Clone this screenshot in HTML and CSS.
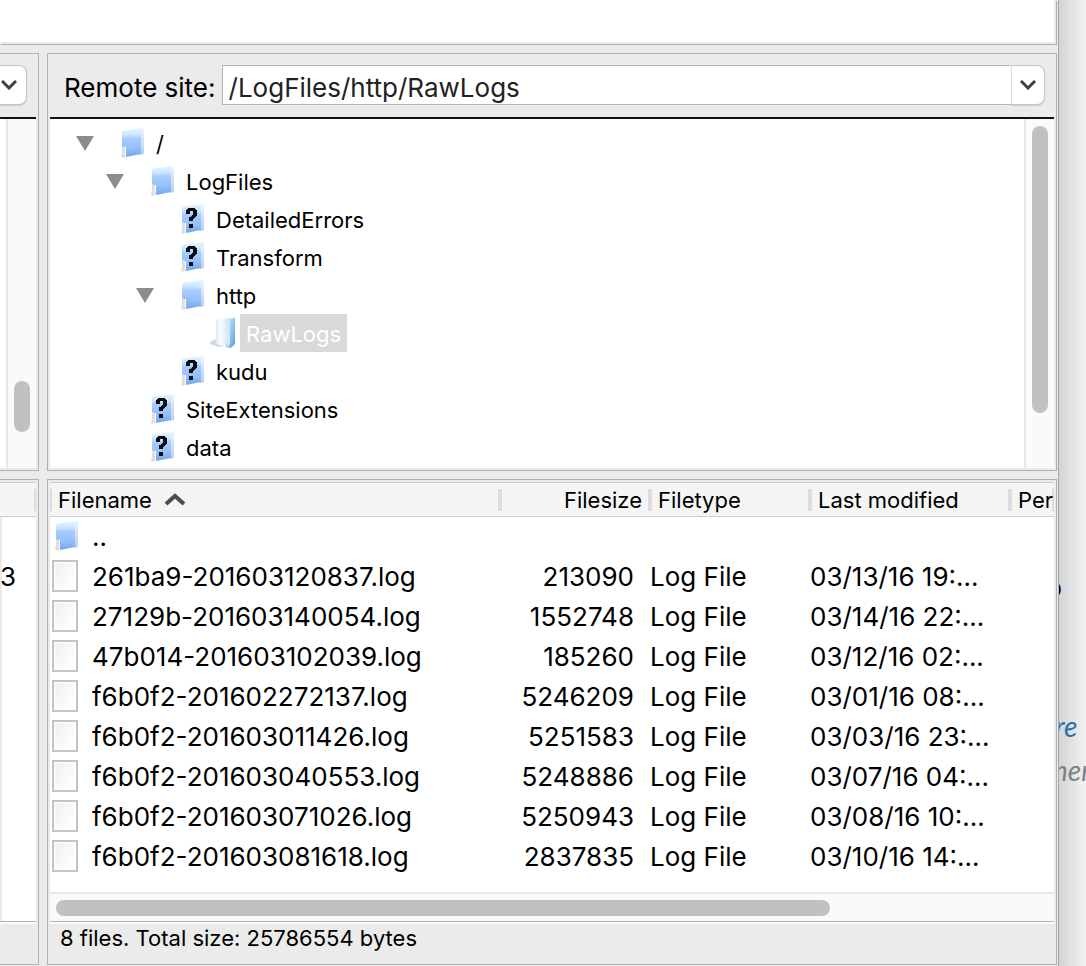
FILE: index.html
```html
<!DOCTYPE html>
<html lang="en">

<head>
  <meta charset="utf-8">
  <title>Remote site</title>
  <link rel="stylesheet" href="styles.css">
</head>

<body>

  <!-- shared icons -->
  <svg class="defs" width="0" height="0">
    <defs>
      <linearGradient id="blue" x1="0" y1="0" x2="0" y2="1">
        <stop offset="0" stop-color="#e4f6ff"/>
        <stop offset="0.22" stop-color="#cde7ff"/>
        <stop offset="0.36" stop-color="#a6ccff"/>
        <stop offset="0.7" stop-color="#94bffa"/>
        <stop offset="1" stop-color="#6fa6ec"/>
      </linearGradient>
      <linearGradient id="side" x1="0" y1="0" x2="0" y2="1">
        <stop offset="0" stop-color="#e9f6fd"/>
        <stop offset="1" stop-color="#b5cfee"/>
      </linearGradient>
      <linearGradient id="open" x1="0" y1="0" x2="1" y2="1">
        <stop offset="0" stop-color="#d2effc"/>
        <stop offset="1" stop-color="#5b9ddc"/>
      </linearGradient>
      <linearGradient id="paper" x1="0" y1="0" x2="1" y2="0">
        <stop offset="0" stop-color="#d5e6f0"/>
        <stop offset="0.5" stop-color="#f8fcfe"/>
        <stop offset="1" stop-color="#dcebf3"/>
      </linearGradient>
      <linearGradient id="sheet" x1="0" y1="0" x2="1" y2="1">
        <stop offset="0" stop-color="#f1f1f1"/>
        <stop offset="1" stop-color="#ffffff"/>
      </linearGradient>
    </defs>
    <symbol id="folder" viewBox="0 0 26 32">
      <path d="M20 2l4-1v26l-4 1z" fill="url(#side)"/>
      <path d="M2 4l19-3v26L6 30V20H2z" fill="url(#blue)"/>
      <path d="M2 19l3 1v8l2 1-5 2-1-2 1-3z" fill="#dedede"/>
    </symbol>
    <symbol id="unknown" viewBox="0 0 26 32">
      <use href="#folder"/>
      <path d="M6 7h1V6h1V5h7v1h1v1h1v6h-1v1h-1v1h-1v1h-1v2H9v-4h2v-1h1v-1h1V8h-3v3H6zM9 21h4v4H9z" fill="#0b0b12"/>
    </symbol>
    <symbol id="opened" viewBox="0 0 26 32">
      <path d="M16 2l9-1v26l-4 4-5-1z" fill="url(#open)"/>
      <path d="M16 2l4-1v26l-3 3z" fill="#cdeafa"/>
      <path d="M6 3l11-2v25l-4 4-9-2 2-4z" fill="url(#paper)"/>
      <path d="M0 25l6-3v5l7 2-4 1-9-3z" fill="#d3dbe2"/>
    </symbol>
    <symbol id="file" viewBox="0 0 26 32">
      <rect x="1" y="1" width="24" height="30" fill="#fff" stroke="#c4c4c4" stroke-width="2"/>
      <rect x="3" y="3" width="20" height="26" fill="url(#sheet)"/>
    </symbol>
    <symbol id="arrow" viewBox="0 0 18 15">
      <path d="M0 0h18L9 15z" fill="#8c8c8c"/>
    </symbol>
    <symbol id="chevron" viewBox="0 0 16 10">
      <path d="M1 1l7 7 7-7" fill="none" stroke="#404040" stroke-width="3"/>
    </symbol>
  </svg>

  <div class="window">
    <div class="log"></div>
    <div class="panes">

      <!-- local side -->
      <div class="pane local">
        <div class="site-bar">
          <button class="drop" aria-label="Local site history"><svg width="16" height="10"><use href="#chevron"/></svg></button>
        </div>
        <div class="tree-wrapper">
          <div class="tree"></div>
          <div class="scroll-v"><div class="thumb thumb-local"></div></div>
        </div>
      </div>

      <!-- remote side -->
      <div class="pane">
        <div class="site-bar">
          <label for="site">Remote site:</label>
          <input class="site" id="site" type="text" value="/LogFiles/http/RawLogs">
          <button class="drop" aria-label="Remote site history"><svg width="16" height="10"><use href="#chevron"/></svg></button>
        </div>
        <div class="tree-wrapper">
          <ul class="tree">
            <li class="level-0"><svg class="arrow"><use href="#arrow"/></svg><svg class="icon"><use href="#folder"/></svg><span>/</span></li>
            <li class="level-1"><svg class="arrow"><use href="#arrow"/></svg><svg class="icon"><use href="#folder"/></svg><span>LogFiles</span></li>
            <li class="level-2"><i class="arrow"></i><svg class="icon"><use href="#unknown"/></svg><span>DetailedErrors</span></li>
            <li class="level-2"><i class="arrow"></i><svg class="icon"><use href="#unknown"/></svg><span>Transform</span></li>
            <li class="level-2"><svg class="arrow"><use href="#arrow"/></svg><svg class="icon"><use href="#folder"/></svg><span>http</span></li>
            <li class="level-3"><i class="arrow"></i><svg class="icon"><use href="#opened"/></svg><span class="selected">RawLogs</span></li>
            <li class="level-2"><i class="arrow"></i><svg class="icon"><use href="#unknown"/></svg><span>kudu</span></li>
            <li class="level-1"><i class="arrow"></i><svg class="icon"><use href="#unknown"/></svg><span>SiteExtensions</span></li>
            <li class="level-1"><i class="arrow"></i><svg class="icon"><use href="#unknown"/></svg><span>data</span></li>
          </ul>
          <div class="scroll-v"><div class="thumb thumb-remote"></div></div>
        </div>
      </div>

      <div class="pane local list">
        <table class="files">
          <thead>
            <tr><th></th></tr>
          </thead>
          <tbody>
            <tr><td></td></tr>
            <tr><td>3</td></tr>
          </tbody>
        </table>
        <div class="status"></div>
      </div>

      <div class="pane list">
        <table class="files">
          <thead>
            <tr>
              <th class="name">Filename <svg class="sort" width="22" height="14" viewBox="0 0 22 14"><path d="M2 12l9-8 9 8" fill="none" stroke="#4c4c4c" stroke-width="4"/></svg></th>
              <th class="size">Filesize</th>
              <th class="type">Filetype</th>
              <th class="date">Last modified</th>
              <th class="perm">Per</th>
            </tr>
          </thead>
          <tbody>
            <tr>
              <td><svg class="icon up"><use href="#folder"/></svg>..</td>
              <td></td>
              <td></td>
              <td></td>
              <td></td>
            </tr>
            <tr>
              <td><svg class="icon"><use href="#file"/></svg>261ba9-201603120837.log</td>
              <td class="size">213090</td>
              <td>Log File</td>
              <td>03/13/16 19:...</td>
              <td></td>
            </tr>
            <tr>
              <td><svg class="icon"><use href="#file"/></svg>27129b-201603140054.log</td>
              <td class="size">1552748</td>
              <td>Log File</td>
              <td>03/14/16 22:...</td>
              <td></td>
            </tr>
            <tr>
              <td><svg class="icon"><use href="#file"/></svg>47b014-201603102039.log</td>
              <td class="size">185260</td>
              <td>Log File</td>
              <td>03/12/16 02:...</td>
              <td></td>
            </tr>
            <tr>
              <td><svg class="icon"><use href="#file"/></svg>f6b0f2-201602272137.log</td>
              <td class="size">5246209</td>
              <td>Log File</td>
              <td>03/01/16 08:...</td>
              <td></td>
            </tr>
            <tr>
              <td><svg class="icon"><use href="#file"/></svg>f6b0f2-201603011426.log</td>
              <td class="size">5251583</td>
              <td>Log File</td>
              <td>03/03/16 23:...</td>
              <td></td>
            </tr>
            <tr>
              <td><svg class="icon"><use href="#file"/></svg>f6b0f2-201603040553.log</td>
              <td class="size">5248886</td>
              <td>Log File</td>
              <td>03/07/16 04:...</td>
              <td></td>
            </tr>
            <tr>
              <td><svg class="icon"><use href="#file"/></svg>f6b0f2-201603071026.log</td>
              <td class="size">5250943</td>
              <td>Log File</td>
              <td>03/08/16 10:...</td>
              <td></td>
            </tr>
            <tr>
              <td><svg class="icon"><use href="#file"/></svg>f6b0f2-201603081618.log</td>
              <td class="size">2837835</td>
              <td>Log File</td>
              <td>03/10/16 14:...</td>
              <td></td>
            </tr>
          </tbody>
        </table>
        <div class="scroll-h"><div class="thumb"></div></div>
        <div class="status">8 files. Total size: 25786554 bytes</div>
      </div>

    </div>
  </div>

  <!-- page behind the window -->
  <div class="behind">
    <p class="behind-dark">o</p>
    <p class="behind-link">re</p>
    <p class="behind-note">her</p>
  </div>

</body>

</html>
```
FILE: styles.css
```css
* {
  box-sizing: border-box;
}

body {
  margin: 0;
  display: flex;
  min-height: 100vh;
  overflow: hidden;
  font-family: Inter, "Liberation Sans", sans-serif;
  font-size: 22px;
  color: #000;
  background-color: #f2f2f2;
}

.defs {
  position: absolute;
}

.window {
  flex: 1;
  min-width: 0;
  display: flex;
  flex-direction: column;
  background-color: #ebebeb;
  border-right: 1px solid #a6a6a6;
}

.log {
  height: 44px;
  margin: 0 2px 8px 0;
  background-color: #fff;
  border: solid #ebebeb;
  border-width: 0 2px 2px 0;
  box-shadow: 1px 1px 0 #b0b0b0;
}

.panes {
  flex: 1;
  display: grid;
  grid-template-columns: 39px minmax(0, 1fr);
  grid-template-rows: auto 1fr;
  gap: 8px;
  padding: 1px 1px 1px 0;
}

.pane {
  min-width: 0;
  display: flex;
  flex-direction: column;
  padding: 2px;
  border: 1px solid #b0b0b0;
}

.local {
  padding-left: 0;
  border-left: 0;
}

/* address bar */
.site-bar {
  display: flex;
  align-items: center;
  height: 61px;
  padding: 0 9px 3px 14px;
  font-size: 26px;
}

.site-bar label {
  padding-top: 5px;
}

.local .site-bar {
  padding-left: 0;
}

.site {
  flex: 1;
  min-width: 0;
  height: 40px;
  margin-left: 6px;
  padding: 5px 6px 0;
  font: inherit;
  color: #222;
  background-color: #fff;
  border: 1px solid #b4b4b4;
  border-right: 0;
  outline: none;
}

.drop {
  display: flex;
  align-items: center;
  justify-content: center;
  width: 34px;
  height: 40px;
  padding: 0;
  background-color: #fff;
  border: 1px solid #c4c4c4;
  border-left-color: #ddd;
  border-radius: 0 8px 8px 0;
  box-shadow: 0 1px 1px #ccc;
}

.local .drop {
  width: 27px;
  padding-right: 8px;
  border-left: 0;
}

/* directory tree */
.tree-wrapper {
  flex: 1;
  display: flex;
  padding-right: 1px;
  background-color: #fff;
  border-top: 2px solid #111;
}

.tree {
  flex: 1;
  min-width: 0;
  margin: 0;
  padding: 5px 0 2px;
  list-style: none;
}

.tree li {
  display: flex;
  align-items: center;
  height: 38px;
}

.tree span {
  height: 38px;
  padding: 0 6px;
  line-height: 40px;
}

.tree .selected {
  color: #fff;
  background-color: #d9d9d9;
}

.level-0 {
  padding-left: 26px;
}

.level-1 {
  padding-left: 56px;
}

.level-2 {
  padding-left: 86px;
}

.level-3 {
  padding-left: 116px;
}

.arrow {
  width: 18px;
  height: 15px;
  margin-right: 26px;
}

.icon {
  width: 26px;
  height: 32px;
}

.tree .icon {
  margin-right: 4px;
}

/* scrollbars */
.scroll-v {
  width: 29px;
  padding: 7px 5px 0 6px;
  background-color: #fafafa;
  border-left: 2px solid #e8e8e8;
}

.scroll-h {
  height: 29px;
  padding: 6px;
  background-color: #fafafa;
  border-top: 2px solid #e8e8e8;
}

.thumb {
  border-radius: 8px;
  background-color: #c1c1c1;
}

.scroll-v .thumb {
  width: 16px;
}

.thumb-remote {
  height: 84%;
}

.thumb-local {
  height: 51px;
  margin-top: 255px;
}

.scroll-h .thumb {
  width: 78%;
  height: 16px;
}

/* file list */
.list {
  background-color: #fff;
  box-shadow: inset 0 0 0 2px #ebebeb;
}

.files {
  width: 100%;
  margin-bottom: auto;
  table-layout: fixed;
  border-collapse: collapse;
}

.files th {
  height: 34px;
  padding: 0 8px;
  font-weight: normal;
  text-align: left;
  white-space: nowrap;
  overflow: hidden;
  background: linear-gradient(#ddd, #ddd) right 6px / 2px 22px no-repeat, linear-gradient(#ddd, #ddd) left 6px / 2px 22px no-repeat, #f5f5f5;
  border: solid #ccc;
  border-width: 1px 0;
}

.local .files th {
  background: linear-gradient(#ddd, #ddd) right 6px / 2px 22px no-repeat, #f5f5f5;
}

.files td {
  height: 40px;
  padding: 0;
  font-size: 26px;
  line-height: 40px;
  white-space: nowrap;
}

.files .icon {
  margin: -6px 14px 0 2px;
  vertical-align: middle;
}

.files .up {
  margin: -6px 12px 0 4px;
}

.files .sort {
  margin-left: 6px;
  vertical-align: 2px;
}

.files .size {
  width: 150px;
  text-align: right;
}

.files td.size {
  padding-right: 16px;
}

.files .type {
  width: 160px;
}

.files .date {
  width: 200px;
}

.files .perm {
  width: 44px;
  padding-right: 0;
}

.status {
  height: 41px;
  padding-left: 10px;
  line-height: 32px;
  background-color: #ebebeb;
  border-top: 1px solid #b4b4b4;
  box-shadow: inset 0 2px 0 #fff;
}

/* page behind */
.behind {
  width: 27px;
  padding-top: 568px;
  overflow: hidden;
  font-family: Lato, sans-serif;
  font-size: 28px;
  line-height: 36px;
  background: linear-gradient(to right, #d4d4d4, #f2f2f2);
}

.behind p {
  height: 36px;
  margin: 0;
}

.behind-dark {
  text-indent: -13px;
}

.behind-link {
  color: #1f74ab;
  font-style: italic;
  text-indent: -4px;
}

.behind .behind-link {
  margin-top: 104px;
}

.behind-note {
  color: #808085;
  font-style: italic;
  text-indent: -6px;
}

.behind .behind-note {
  margin-top: 8px;
}
```
